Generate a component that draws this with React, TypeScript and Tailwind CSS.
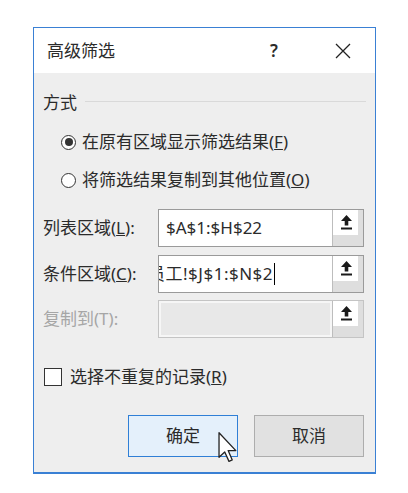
import React from "react"

const font = {
  fontFamily: '"Segoe UI", "Noto Sans", "Noto Sans CJK SC", sans-serif',
}

function UpArrow() {
  return (
    <svg width="13" height="17" viewBox="0 0 13 17">
      <path d="M6.5 1 L12 7 L8.3 7 L8.3 11.5 L4.7 11.5 L4.7 7 L1 7 Z" fill="#1a1a1a" />
      <rect x="1" y="13.5" width="11" height="2" fill="#1a1a1a" />
    </svg>
  )
}

function PickButton() {
  return (
    <div className="flex w-[31px] flex-col border-l border-[#bdbdbd] bg-[#dedede]">
      <div className="mr-[5px] flex h-[25px] items-center justify-center bg-white pl-[2px]">
        <UpArrow />
      </div>
    </div>
  )
}

function Radio({ checked, children }: { checked?: boolean; children: React.ReactNode }) {
  return (
    <div className="flex h-[30px] items-center pl-[27px]">
      <span className="flex h-[15px] w-[15px] items-center justify-center rounded-full border border-[#333] bg-white">
        {checked ? <span className="h-[8px] w-[8px] rounded-full bg-[#333]" /> : null}
      </span>
      <span className="ml-[6px]">{children}</span>
    </div>
  )
}

function FieldRow({
  label,
  disabled,
  children,
}: {
  label: React.ReactNode
  disabled?: boolean
  children?: React.ReactNode
}) {
  return (
    <div className="flex h-[38px] items-center">
      <div className={`w-[124px] pl-[9px] ${disabled ? "text-[#a6a6a6]" : ""}`}>{label}</div>
      <div
        className={`flex h-full w-[206px] border ${
          disabled ? "border-[#c4c4c4] bg-[#f6f6f6]" : "border-[#9a9a9a] bg-white"
        }`}
      >
        {disabled ? (
          <div className="m-[2px] flex-1 bg-[#e8e8e8]" />
        ) : (
          <div className="flex flex-1 items-center overflow-hidden pl-[7px]">{children}</div>
        )}
        <PickButton />
      </div>
    </div>
  )
}

export default function App() {
  return (
    <div className="h-[493px] w-[408px] overflow-hidden bg-white text-[17px] leading-[24px] text-[#2b2b2b]" style={font}>
      <div className="ml-[33px] mt-[27px] w-[343px] border border-b-2 border-[#3a80d4]">
        <div className="flex h-[45px] items-center bg-white">
          <div className="flex-1 pl-[13px]">高级筛选</div>
          <div className="mr-[17px] w-[40px] text-center font-semibold">?</div>
          <div className="flex w-[64px] justify-center">
            <svg width="16" height="16" viewBox="0 0 16 16">
              <path d="M1 1 L15 15 M15 1 L1 15" stroke="#222" strokeWidth="1.3" />
            </svg>
          </div>
        </div>

        <div className="bg-[#eeeeee] pb-[15px] pt-[18px]">
          <div className="flex items-center pl-[9px] pr-[9px]">
            <span>方式</span>
            <span className="ml-[8px] mt-[-4px] h-px flex-1 bg-[#d9d9d9]" />
          </div>

          <div className="mt-[12px]">
            <Radio checked>
              在原有区域显示筛选结果(<span className="underline">F</span>)
            </Radio>
          </div>
          <div className="mt-[8px]">
            <Radio>
              将筛选结果复制到其他位置(<span className="underline">O</span>)
            </Radio>
          </div>

          <div className="mt-[14px]">
            <FieldRow
              label={
                <>
                  列表区域(<span className="underline">L</span>):
                </>
              }
            >
              <span className="whitespace-nowrap">$A$1:$H$22</span>
            </FieldRow>
          </div>
          <div className="mt-[8px]">
            <FieldRow
              label={
                <>
                  条件区域(<span className="underline">C</span>):
                </>
              }
            >
              <span className="ml-[-18px] whitespace-nowrap tracking-[0.5px]">员工!$J$1:$N$2</span>
              <span className="ml-[1px] h-[22px] w-px bg-black" />
            </FieldRow>
          </div>
          <div className="mt-[7px]">
            <FieldRow disabled label="复制到(T):" />
          </div>

          <div className="mt-[29px] flex h-[20px] items-center pl-[10px]">
            <span className="h-[18px] w-[18px] border border-[#333] bg-white" />
            <span className="ml-[8px]">
              选择不重复的记录(<span className="underline">R</span>)
            </span>
          </div>

          <div className="mt-[28px] flex justify-end gap-[16px] pr-[11px]">
            <div className="relative flex h-[42px] w-[110px] items-center justify-center border border-[#2f7fd6] bg-[#e4f0fb]">
              确定
              <svg
                className="absolute left-[89px] top-[16px]"
                width="20"
                height="31"
                viewBox="0 0 12 19"
              >
                <path
                  d="M0.5 0.5 L0.5 15.5 L4 12.2 L6.6 18 L8.6 17.1 L6.1 11.4 L10.8 11.4 Z"
                  fill="white"
                  stroke="#222"
                  strokeWidth="0.8"
                  strokeLinejoin="round"
                />
              </svg>
            </div>
            <div className="flex h-[42px] w-[110px] items-center justify-center border border-[#adadad] bg-[#e1e1e1]">
              取消
            </div>
          </div>
        </div>
      </div>
    </div>
  )
}
